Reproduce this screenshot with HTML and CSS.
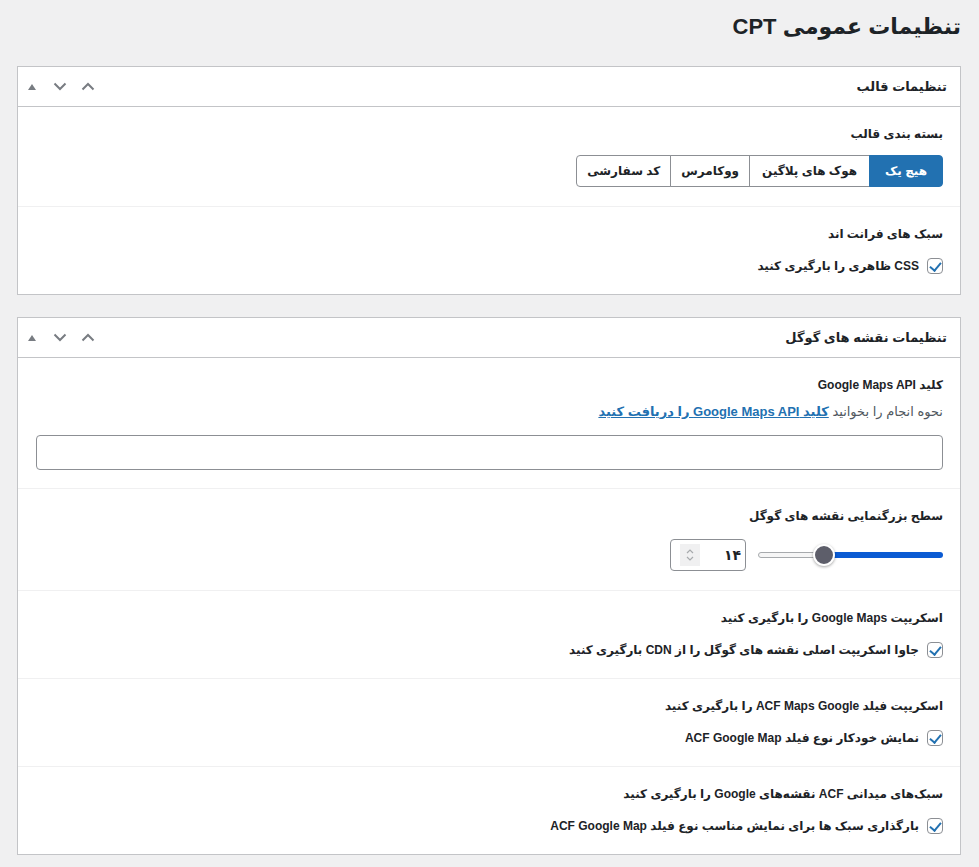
FILE: index.html
```html
<!DOCTYPE html>
<html lang="fa" dir="rtl">
<head>
  <meta charset="UTF-8" />
  <title>تنظیمات عمومی CPT</title>
  <link rel="stylesheet" href="styles.css">
</head>
<body>
  <div class="wrap">
    <h1 class="page-title">تنظیمات عمومی CPT</h1>

    <!-- theme settings -->
    <div class="postbox">
      <div class="postbox-header">
        <h2>تنظیمات قالب</h2>
        <div class="handle-actions">
          <button class="handle-btn" type="button">
            <svg width="14" height="9" viewBox="0 0 14 9"><path d="M1.5 7.5 7 2l5.5 5.5" fill="none" stroke="#787c82" stroke-width="2"/></svg>
          </button>
          <button class="handle-btn" type="button">
            <svg width="14" height="9" viewBox="0 0 14 9"><path d="M1.5 1.5 7 7l5.5-5.5" fill="none" stroke="#787c82" stroke-width="2"/></svg>
          </button>
          <button class="handle-btn" type="button">
            <svg width="10" height="8" viewBox="0 0 10 8"><path d="M5 1 9 7H1z" fill="#787c82"/></svg>
          </button>
        </div>
      </div>
      <div class="inside">
        <div class="field">
          <label class="field-label">بسته بندی قالب</label>
          <div class="button-group">
            <button type="button" class="group-btn active">هیچ یک</button>
            <button type="button" class="group-btn">هوک های پلاگین</button>
            <button type="button" class="group-btn">ووکامرس</button>
            <button type="button" class="group-btn">کد سفارشی</button>
          </div>
        </div>
        <div class="field">
          <label class="field-label">سبک های فرانت اند</label>
          <label class="check-row"><span class="checkbox checked"></span>CSS ظاهری را بارگیری کنید</label>
        </div>
      </div>
    </div>

    <!-- google maps settings -->
    <div class="postbox">
      <div class="postbox-header">
        <h2>تنظیمات نقشه های گوگل</h2>
        <div class="handle-actions">
          <button class="handle-btn" type="button">
            <svg width="14" height="9" viewBox="0 0 14 9"><path d="M1.5 7.5 7 2l5.5 5.5" fill="none" stroke="#787c82" stroke-width="2"/></svg>
          </button>
          <button class="handle-btn" type="button">
            <svg width="14" height="9" viewBox="0 0 14 9"><path d="M1.5 1.5 7 7l5.5-5.5" fill="none" stroke="#787c82" stroke-width="2"/></svg>
          </button>
          <button class="handle-btn" type="button">
            <svg width="10" height="8" viewBox="0 0 10 8"><path d="M5 1 9 7H1z" fill="#787c82"/></svg>
          </button>
        </div>
      </div>
      <div class="inside">
        <div class="field">
          <label class="field-label">کلید Google Maps API</label>
          <p class="description">نحوه انجام را بخوانید <a href="#">کلید Google Maps API را دریافت کنید</a></p>
          <input type="text" class="text-input">
        </div>
        <div class="field">
          <label class="field-label">سطح بزرگنمایی نقشه های گوگل</label>
          <div class="range-row">
            <div class="range">
              <span class="range-fill"></span>
              <span class="range-thumb"></span>
              <span class="range-empty"></span>
            </div>
            <div class="number-input">
              <span class="number-value">۱۴</span>
              <span class="spinner">
                <svg width="8" height="14" viewBox="0 0 8 14"><path d="M1 5 4 2l3 3M1 9l3 3 3-3" fill="none" stroke="#a7aaad" stroke-width="1.2"/></svg>
              </span>
            </div>
          </div>
        </div>
        <div class="field">
          <label class="field-label">اسکریپت Google Maps را بارگیری کنید</label>
          <label class="check-row"><span class="checkbox checked"></span>جاوا اسکریپت اصلی نقشه های گوگل را از CDN بارگیری کنید</label>
        </div>
        <div class="field">
          <label class="field-label">اسکریپت فیلد ACF Maps Google را بارگیری کنید</label>
          <label class="check-row"><span class="checkbox checked"></span>نمایش خودکار نوع فیلد ACF Google Map</label>
        </div>
        <div class="field">
          <label class="field-label">سبک‌های میدانی ACF نقشه‌های Google را بارگیری کنید</label>
          <label class="check-row"><span class="checkbox checked"></span>بارگذاری سبک ها برای نمایش مناسب نوع فیلد ACF Google Map</label>
        </div>
      </div>
    </div>
  </div>
</body>
</html>
```

FILE: styles.css
```css
* { box-sizing: border-box; }

body {
  margin: 0;
  background: #f0f0f1;
  color: #1d2327;
  font-family: "Liberation Sans", "DejaVu Sans", sans-serif;
  font-size: 13px;
}

.wrap {
  padding: 12px 18px 20px 17px;
}

.page-title {
  margin: 0 0 24px;
  font-size: 22px;
  line-height: 30px;
  font-weight: 700;
}

.postbox {
  background: #fff;
  border: 1px solid #c3c4c7;
  margin-bottom: 22px;
}

.postbox-header {
  display: flex;
  align-items: center;
  justify-content: space-between;
  height: 40px;
  padding-right: 13px;
  border-bottom: 1px solid #c3c4c7;
}

.postbox-header h2 {
  margin: 0;
  font-size: 13px;
  font-weight: 700;
}

.handle-actions {
  display: flex;
}

.handle-btn {
  width: 28px;
  height: 38px;
  padding: 0;
  border: none;
  background: none;
  display: flex;
  align-items: center;
  justify-content: center;
}

.field {
  padding: 17px 17px 17px 18px;
  border-top: 1px solid #f0f0f1;
}

.field:first-child {
  border-top: none;
}

.field-label {
  display: block;
  line-height: 20px;
  font-size: 12px;
  font-weight: 700;
  margin-bottom: 11px;
}

.button-group {
  display: flex;
  margin-bottom: 2px;
}

.group-btn {
  height: 32px;
  padding: 0 10px;
  font-family: inherit;
  font-size: 12px;
  font-weight: 700;
  color: #1d2327;
  background: #fff;
  border: 1px solid #8c8f94;
  margin-left: -1px;
}

.group-btn:first-child {
  border-radius: 0 4px 4px 0;
  padding: 0 15px;
}

.group-btn:nth-child(2) {
  padding: 0 12px;
}

.group-btn:last-child {
  border-radius: 4px 0 0 4px;
}

.group-btn.active {
  background: #2271b1;
  border-color: #2271b1;
  color: #fff;
  position: relative;
}

.check-row {
  display: flex;
  align-items: center;
  gap: 8px;
  height: 22px;
  font-size: 12px;
  font-weight: 700;
}

.checkbox {
  width: 16px;
  height: 16px;
  border: 1px solid #8c8f94;
  border-radius: 4px;
  background: #fff;
  position: relative;
  flex: none;
}

.checkbox.checked::after {
  content: "";
  position: absolute;
  left: 4px;
  top: 1px;
  width: 5px;
  height: 9px;
  border: solid #2271b1;
  border-width: 0 2px 2px 0;
  transform: rotate(40deg);
}

.description {
  margin: -4px 0 13px;
  line-height: 20px;
  color: #50575e;
}

.description a {
  color: #2271b1;
  font-weight: 700;
  text-decoration: underline;
}

.text-input {
  display: block;
  width: 100%;
  height: 35px;
  border: 1px solid #8c8f94;
  border-radius: 4px;
  margin-bottom: 1px;
}

.range-row {
  display: flex;
  align-items: center;
  gap: 12px;
  margin: 13px 0 2px;
}

.range {
  display: flex;
  align-items: center;
  width: 185px;
  height: 32px;
}

.range-fill {
  flex: 1;
  height: 6px;
  background: #0b5bd3;
  border-radius: 3px;
  margin-left: -4px;
}

.range-thumb {
  width: 22px;
  height: 22px;
  border-radius: 50%;
  background: #5d5e6a;
  border: 2px solid #fff;
  box-shadow: 0 1px 3px rgba(0, 0, 0, 0.35);
  position: relative;
  z-index: 1;
  flex: none;
}

.range-empty {
  width: 59px;
  height: 6px;
  background: #f6f6f6;
  border: 1px solid #a7aaad;
  border-radius: 3px;
  margin-right: -4px;
}

.number-input {
  width: 76px;
  height: 32px;
  border: 1px solid #8c8f94;
  border-radius: 4px;
  display: flex;
  align-items: center;
  justify-content: space-between;
  padding: 0 4px 0 9px;
}

.number-value {
  font-weight: 700;
  font-size: 14px;
}

.spinner {
  width: 20px;
  height: 22px;
  background: #f0f0f1;
  display: flex;
  align-items: center;
  justify-content: center;
}
```
